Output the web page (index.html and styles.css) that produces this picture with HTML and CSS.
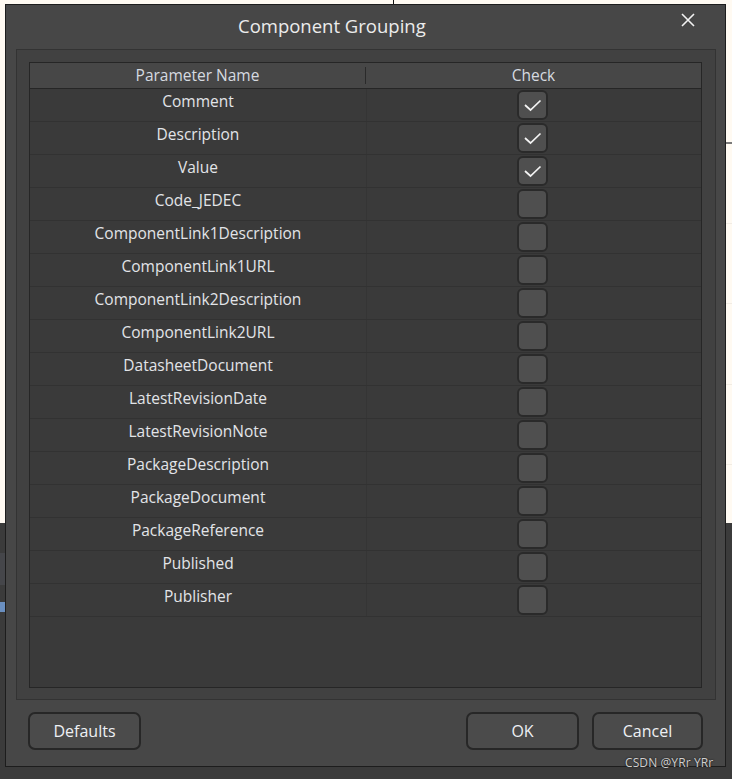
FILE: index.html
```html
<!DOCTYPE html>
<html>
<head>
<meta charset="utf-8">
<link rel="stylesheet" href="styles.css">
</head>
<body>
<div class="stage">
  <div class="dialog">
    <div class="titlebar">
      <div class="title">Component Grouping</div>
      <svg class="close" width="14" height="14" viewBox="0 0 14 14"><path d="M1 1 L13 13 M13 1 L1 13" stroke="#f2f2f2" stroke-width="1.6" fill="none"/></svg>
    </div>
    <div class="panel">
      <div class="table">
        <div class="head">
          <div class="hcell hname">Parameter Name</div>
          <div class="hcell">Check</div>
        </div>
        <div class="row"><div class="name">Comment</div><div class="chk"><span class="box"><svg width="31" height="30" viewBox="0 0 31 30"><path d="M8 15 L13.5 20 L23.5 10.5" stroke="#f4f4f4" stroke-width="1.7" fill="none"/></svg></span></div></div>
        <div class="row"><div class="name">Description</div><div class="chk"><span class="box"><svg width="31" height="30" viewBox="0 0 31 30"><path d="M8 15 L13.5 20 L23.5 10.5" stroke="#f4f4f4" stroke-width="1.7" fill="none"/></svg></span></div></div>
        <div class="row"><div class="name">Value</div><div class="chk"><span class="box"><svg width="31" height="30" viewBox="0 0 31 30"><path d="M8 15 L13.5 20 L23.5 10.5" stroke="#f4f4f4" stroke-width="1.7" fill="none"/></svg></span></div></div>
        <div class="row"><div class="name">Code_JEDEC</div><div class="chk"><span class="box"></span></div></div>
        <div class="row"><div class="name">ComponentLink1Description</div><div class="chk"><span class="box"></span></div></div>
        <div class="row"><div class="name">ComponentLink1URL</div><div class="chk"><span class="box"></span></div></div>
        <div class="row"><div class="name">ComponentLink2Description</div><div class="chk"><span class="box"></span></div></div>
        <div class="row"><div class="name">ComponentLink2URL</div><div class="chk"><span class="box"></span></div></div>
        <div class="row"><div class="name">DatasheetDocument</div><div class="chk"><span class="box"></span></div></div>
        <div class="row"><div class="name">LatestRevisionDate</div><div class="chk"><span class="box"></span></div></div>
        <div class="row"><div class="name">LatestRevisionNote</div><div class="chk"><span class="box"></span></div></div>
        <div class="row"><div class="name">PackageDescription</div><div class="chk"><span class="box"></span></div></div>
        <div class="row"><div class="name">PackageDocument</div><div class="chk"><span class="box"></span></div></div>
        <div class="row"><div class="name">PackageReference</div><div class="chk"><span class="box"></span></div></div>
        <div class="row"><div class="name">Published</div><div class="chk"><span class="box"></span></div></div>
        <div class="row"><div class="name">Publisher</div><div class="chk"><span class="box"></span></div></div>
      </div>
    </div>
    <div class="buttons">
      <div class="btn btn-defaults">Defaults</div>
      <div class="spacer"></div>
      <div class="btn btn-ok">OK</div>
      <div class="btn btn-cancel">Cancel</div>
    </div>
  </div>
</div>
<div class="watermark">CSDN @YRr YRr</div>
</body>
</html>
```

FILE: styles.css
```css
html, body {
  margin: 0;
  padding: 0;
}
body {
  width: 732px;
  height: 779px;
  overflow: hidden;
  position: relative;
  font-family: "Open Sans", "Noto Sans", sans-serif;
  background:
    linear-gradient(#7a7a7a, #7a7a7a) 726px 142px / 6px 2px no-repeat,
    linear-gradient(#f1ece4, #f1ece4) 726px 223px / 6px 1px no-repeat,
    linear-gradient(#f1ece4, #f1ece4) 726px 303px / 6px 1px no-repeat,
    linear-gradient(#f1ece4, #f1ece4) 726px 384px / 6px 1px no-repeat,
    linear-gradient(#f1ece4, #f1ece4) 726px 464px / 6px 1px no-repeat,
    linear-gradient(#111, #111) 393px 0 / 1px 4px no-repeat,
    linear-gradient(#45464a, #45464a) 0 553px / 5px 32px no-repeat,
    linear-gradient(#6a8fc0, #6a8fc0) 0 602px / 5px 10px no-repeat,
    linear-gradient(#fffaf2 0, #fffaf2 523px, #3b3b3b 523px, #3b3b3b 100%);
}
.stage {
  padding: 4px 0 0 5px;
}
.dialog {
  width: 721px;
  height: 763px;
  box-sizing: border-box;
  border: 1px solid #1d1d1d;
  background: #474747;
  display: flex;
  flex-direction: column;
}
.titlebar {
  height: 44px;
  display: flex;
  align-items: center;
  justify-content: space-between;
  padding: 0 30px 4px 232px;
  box-sizing: border-box;
}
.title {
  color: #ececec;
  font-size: 18.5px;
}
.close {
  display: block;
  margin-top: -10px;
}
.panel {
  height: 651px;
  margin: 0 9px 0 10px;
  box-sizing: border-box;
  border: 1px solid #333333;
  background: #414141;
  padding: 12px 13px 11px 12px;
}
.table {
  height: 100%;
  box-sizing: border-box;
  border: 1px solid #262626;
  background: #3a3a3a;
}
.head {
  display: grid;
  grid-template-columns: 336px 1fr;
  height: 26px;
  box-sizing: border-box;
  border-bottom: 1px solid #262626;
  background: #474747;
  align-items: center;
}
.hcell {
  text-align: center;
  color: #d6dae0;
  font-size: 15.5px;
  line-height: 25px;
  height: 25px;
}
.hname {
  border-right: 1px solid #2a2a2a;
  height: 17px;
  line-height: 17px;
  box-sizing: border-box;
}
.row {
  display: grid;
  grid-template-columns: 337px 1fr;
  height: 33px;
  box-sizing: border-box;
  border-bottom: 1px solid #323232;
}
.name {
  border-right: 1px solid #353535;
  text-align: center;
  color: #e2e4e8;
  font-size: 15.5px;
  line-height: 25px;
}
.chk {
  display: flex;
  justify-content: center;
  align-items: center;
  padding-right: 3px;
}
.box {
  display: block;
  width: 31px;
  height: 30px;
  box-sizing: border-box;
  border: 2px solid #2a2a2a;
  border-radius: 6px;
  background: #4f4f4f;
}
.box svg {
  display: block;
  margin: -2px 0 0 -2px;
}
.buttons {
  display: flex;
  margin-top: 12px;
  padding: 0 22px 0 22px;
}
.spacer {
  flex: 1;
}
.btn {
  height: 38px;
  box-sizing: border-box;
  border: 2px solid #272727;
  border-radius: 7px;
  background: #4b4b4b;
  color: #eef0f4;
  font-size: 16px;
  line-height: 34px;
  text-align: center;
}
.btn-defaults {
  width: 113px;
}
.btn-ok {
  width: 113px;
}
.btn-cancel {
  width: 111px;
  margin-left: 13px;
}
.watermark {
  position: absolute;
  left: 625px;
  top: 754px;
  font-size: 12px;
  color: #d0d0d0;
  text-shadow: 0 0 2px #222, 0 0 1px #222;
  letter-spacing: 0.1px;
}
```
